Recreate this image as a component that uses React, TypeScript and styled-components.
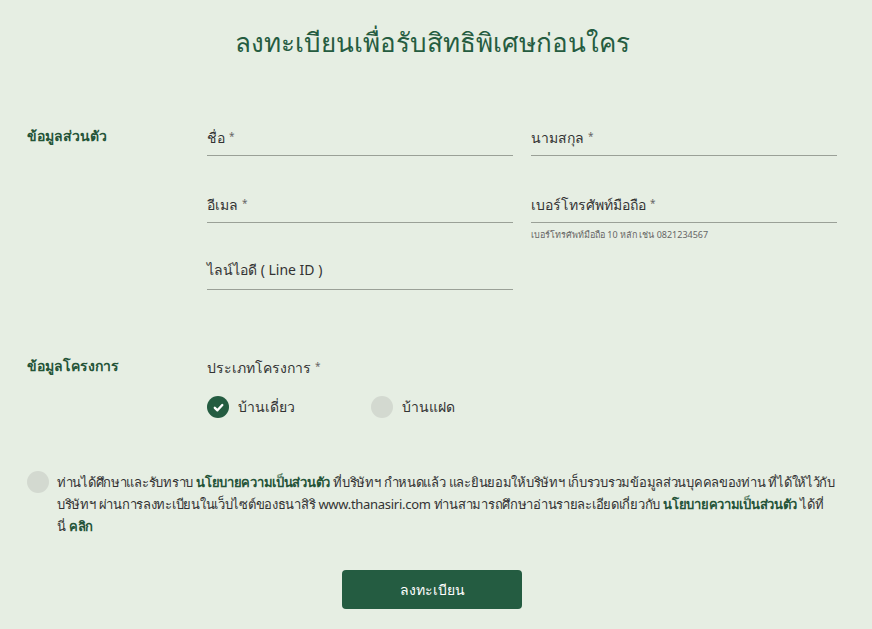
import React from "react";
import styled, { createGlobalStyle } from "styled-components";

const Global = createGlobalStyle`
  html, body { margin: 0; padding: 0; background: #e6eee3; }
  body { font-family: "Noto Sans", "DejaVu Sans", sans-serif; color: #333; }
  * { box-sizing: border-box; }
`;

const Page = styled.div`
  width: 872px;
  min-height: 629px;
  background: #e6eee3;
  padding: 22px 35px 0 27px;
`;

const Title = styled.h1`
  margin: 0;
  text-align: center;
  font-size: 26px;
  font-weight: 400;
  color: #255c40;
  line-height: 40px;
`;

const Section = styled.section<{ $top: number }>`
  display: grid;
  grid-template-columns: 180px 1fr;
  margin-top: ${(p) => p.$top}px;
`;

const SectionLabel = styled.div`
  font-size: 14px;
  font-weight: 700;
  color: #245438;
  line-height: 20px;
`;

const FieldGrid = styled.div`
  display: grid;
  grid-template-columns: 306px 306px;
  column-gap: 18px;
`;

const Field = styled.div`
  display: flex;
  flex-direction: column;
  min-height: 67px;
`;

const InputLine = styled.div`
  height: 30px;
  border-bottom: 1px solid #9aa097;
  font-size: 14px;
  line-height: 20px;
  color: #333;
`;

const Req = styled.span`
  font-size: 10px;
  color: #666;
  margin-left: 4px;
  vertical-align: 3px;
`;

const Helper = styled.div`
  margin-top: 5px;
  font-size: 9px;
  color: #666;
`;

const SubLabel = styled.div`
  font-size: 14px;
  line-height: 20px;
  color: #333;
`;

const RadioRow = styled.div`
  display: flex;
  margin-top: 18px;
`;

const RadioItem = styled.label`
  display: flex;
  align-items: center;
  gap: 9px;
  width: 164px;
  font-size: 14px;
  color: #333;
`;

const Circle = styled.span<{ $on?: boolean }>`
  width: 22px;
  height: 22px;
  border-radius: 50%;
  background: ${(p) => (p.$on ? "#245c41" : "#d3d9d0")};
  display: inline-flex;
  align-items: center;
  justify-content: center;
  flex: none;
`;

const Consent = styled.div`
  display: flex;
  align-items: flex-start;
  gap: 8px;
  margin-top: 53px;
`;

const ConsentText = styled.p`
  margin: 0;
  font-size: 13px;
  letter-spacing: -0.28px;
  line-height: 22px;
  color: #333;
  white-space: nowrap;
`;

const Strong = styled.b`
  color: #245438;
  font-weight: 700;
`;

const ButtonRow = styled.div`
  display: flex;
  justify-content: center;
  margin-top: 33px;
`;

const Button = styled.button`
  width: 180px;
  height: 39px;
  border: none;
  border-radius: 4px;
  background: #245c41;
  color: #fff;
  font-family: inherit;
  font-size: 14px;
  font-weight: 500;
  cursor: pointer;
`;

const Check = () => (
  <svg width="13" height="13" viewBox="0 0 12 12">
    <path d="M2.6 6.3 L5 8.6 L9.5 3.7" fill="none" stroke="#fff" strokeWidth="2.2" strokeLinecap="round" strokeLinejoin="round" />
  </svg>
);

export default function App() {
  return (
    <Page>
      <Global />
      <Title>ลงทะเบียนเพื่อรับสิทธิพิเศษก่อนใคร</Title>

      <Section $top={64}>
        <SectionLabel>ข้อมูลส่วนตัว</SectionLabel>
        <FieldGrid>
          <Field>
            <InputLine>ชื่อ<Req>*</Req></InputLine>
          </Field>
          <Field>
            <InputLine>นามสกุล<Req>*</Req></InputLine>
          </Field>
          <Field>
            <InputLine>อีเมล<Req>*</Req></InputLine>
          </Field>
          <Field>
            <InputLine>เบอร์โทรศัพท์มือถือ<Req>*</Req></InputLine>
            <Helper>เบอร์โทรศัพท์มือถือ 10 หลัก เช่น 0821234567</Helper>
          </Field>
          <Field>
            <InputLine>ไลน์ไอดี ( Line ID )</InputLine>
          </Field>
        </FieldGrid>
      </Section>

      <Section $top={29}>
        <SectionLabel>ข้อมูลโครงการ</SectionLabel>
        <div>
          <SubLabel>ประเภทโครงการ<Req>*</Req></SubLabel>
          <RadioRow>
            <RadioItem>
              <Circle $on><Check /></Circle>
              บ้านเดี่ยว
            </RadioItem>
            <RadioItem>
              <Circle />
              บ้านแฝด
            </RadioItem>
          </RadioRow>
        </div>
      </Section>

      <Consent>
        <Circle />
        <ConsentText>
          ท่านได้ศึกษาและรับทราบ <Strong>นโยบายความเป็นส่วนตัว</Strong> ที่บริษัทฯ กำหนดแล้ว และยินยอมให้บริษัทฯ เก็บรวบรวมข้อมูลส่วนบุคคลของท่าน ที่ได้ให้ไว้กับ
          <br />
          บริษัทฯ ผ่านการลงทะเบียนในเว็บไซต์ของธนาสิริ www.thanasiri.com ท่านสามารถศึกษาอ่านรายละเอียดเกี่ยวกับ <Strong>นโยบายความเป็นส่วนตัว</Strong> ได้ที่
          <br />
          นี่ <Strong>คลิก</Strong>
        </ConsentText>
      </Consent>

      <ButtonRow>
        <Button>ลงทะเบียน</Button>
      </ButtonRow>
    </Page>
  );
}
